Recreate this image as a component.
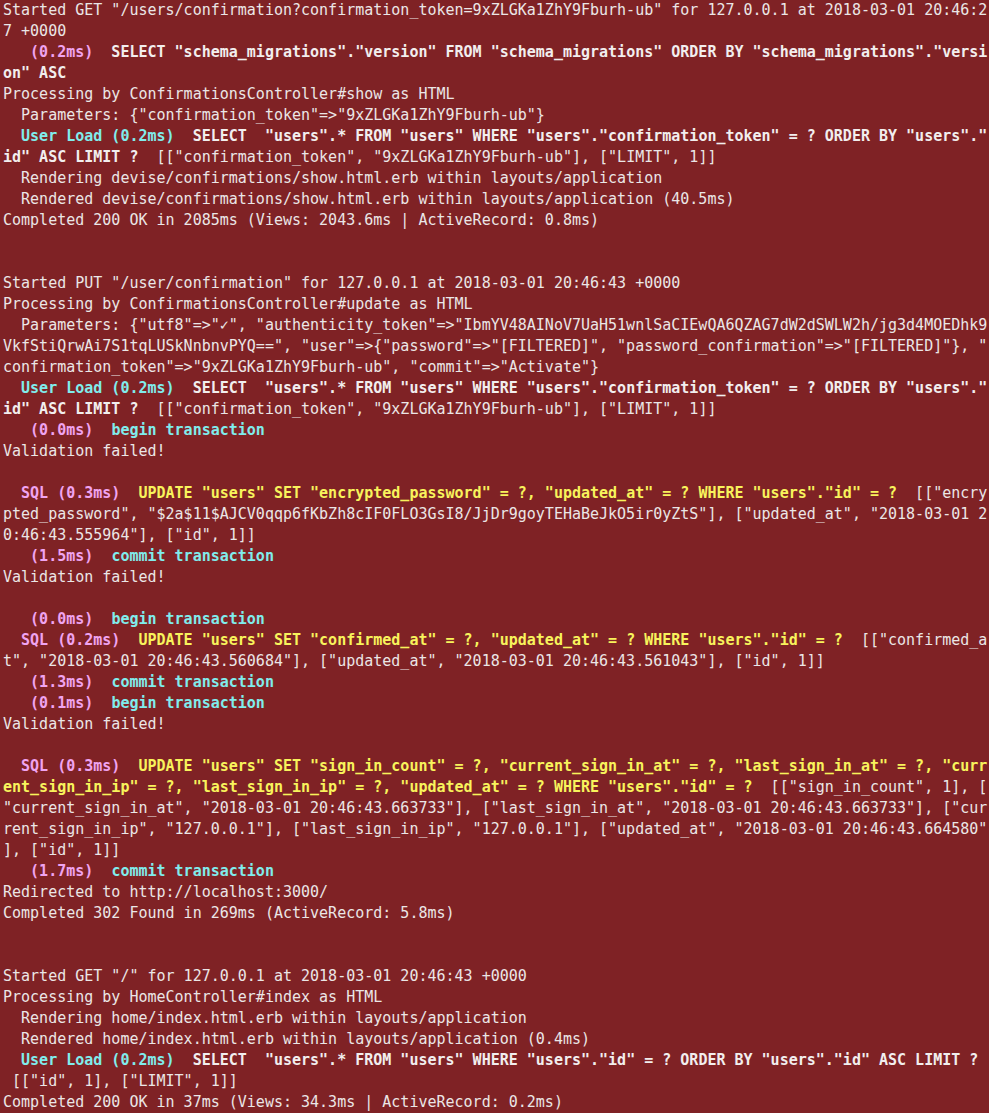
type Seg = [string, 'n' | 'b' | 'm' | 'c' | 'y']

const tone: Record<Seg[1], string> = {
  n: 'text-[#ebe6e6]',
  b: 'text-[#f2eeee] font-bold',
  m: 'text-[#f0a4f0] font-bold',
  c: 'text-[#80ecec] font-bold',
  y: 'text-[#f8f35c] font-bold',
}

// each row is one wrapped terminal line (109 columns)
const rows: Seg[][] = [
  [['Started GET "/users/confirmation?confirmation_token=9xZLGKa1ZhY9Fburh-ub" for 127.0.0.1 at 2018-03-01 20:46:2', 'n']],
  [['7 +0000', 'n']],
  [['   ', 'n'], ['(0.2ms)', 'm'], ['  SELECT "schema_migrations"."version" FROM "schema_migrations" ORDER BY "schema_migrations"."versi', 'b']],
  [['on" ASC', 'b']],
  [['Processing by ConfirmationsController#show as HTML', 'n']],
  [['  Parameters: {"confirmation_token"=>"9xZLGKa1ZhY9Fburh-ub"}', 'n']],
  [['  ', 'n'], ['User Load (0.2ms)', 'c'], ['  SELECT  "users".* FROM "users" WHERE "users"."confirmation_token" = ? ORDER BY "users"."', 'b']],
  [['id" ASC LIMIT ?', 'b'], ['  [["confirmation_token", "9xZLGKa1ZhY9Fburh-ub"], ["LIMIT", 1]]', 'n']],
  [['  Rendering devise/confirmations/show.html.erb within layouts/application', 'n']],
  [['  Rendered devise/confirmations/show.html.erb within layouts/application (40.5ms)', 'n']],
  [['Completed 200 OK in 2085ms (Views: 2043.6ms | ActiveRecord: 0.8ms)', 'n']],
  [],
  [],
  [['Started PUT "/user/confirmation" for 127.0.0.1 at 2018-03-01 20:46:43 +0000', 'n']],
  [['Processing by ConfirmationsController#update as HTML', 'n']],
  [['  Parameters: {"utf8"=>"✓", "authenticity_token"=>"IbmYV48AINoV7UaH51wnlSaCIEwQA6QZAG7dW2dSWLW2h/jg3d4MOEDhk9', 'n']],
  [['VkfStiQrwAi7S1tqLUSkNnbnvPYQ==", "user"=>{"password"=>"[FILTERED]", "password_confirmation"=>"[FILTERED]"}, "', 'n']],
  [['confirmation_token"=>"9xZLGKa1ZhY9Fburh-ub", "commit"=>"Activate"}', 'n']],
  [['  ', 'n'], ['User Load (0.2ms)', 'c'], ['  SELECT  "users".* FROM "users" WHERE "users"."confirmation_token" = ? ORDER BY "users"."', 'b']],
  [['id" ASC LIMIT ?', 'b'], ['  [["confirmation_token", "9xZLGKa1ZhY9Fburh-ub"], ["LIMIT", 1]]', 'n']],
  [['   ', 'n'], ['(0.0ms)', 'm'], ['  ', 'n'], ['begin transaction', 'c']],
  [['Validation failed!', 'n']],
  [],
  [['  ', 'n'], ['SQL (0.3ms)', 'm'], ['  UPDATE "users" SET "encrypted_password" = ?, "updated_at" = ? WHERE "users"."id" = ?', 'y'], ['  [["encry', 'n']],
  [['pted_password", "$2a$11$AJCV0qqp6fKbZh8cIF0FLO3GsI8/JjDr9goyTEHaBeJkO5ir0yZtS"], ["updated_at", "2018-03-01 2', 'n']],
  [['0:46:43.555964"], ["id", 1]]', 'n']],
  [['   ', 'n'], ['(1.5ms)', 'm'], ['  ', 'n'], ['commit transaction', 'c']],
  [['Validation failed!', 'n']],
  [],
  [['   ', 'n'], ['(0.0ms)', 'm'], ['  ', 'n'], ['begin transaction', 'c']],
  [['  ', 'n'], ['SQL (0.2ms)', 'm'], ['  UPDATE "users" SET "confirmed_at" = ?, "updated_at" = ? WHERE "users"."id" = ?', 'y'], ['  [["confirmed_a', 'n']],
  [['t", "2018-03-01 20:46:43.560684"], ["updated_at", "2018-03-01 20:46:43.561043"], ["id", 1]]', 'n']],
  [['   ', 'n'], ['(1.3ms)', 'm'], ['  ', 'n'], ['commit transaction', 'c']],
  [['   ', 'n'], ['(0.1ms)', 'm'], ['  ', 'n'], ['begin transaction', 'c']],
  [['Validation failed!', 'n']],
  [],
  [['  ', 'n'], ['SQL (0.3ms)', 'm'], ['  UPDATE "users" SET "sign_in_count" = ?, "current_sign_in_at" = ?, "last_sign_in_at" = ?, "curr', 'y']],
  [['ent_sign_in_ip" = ?, "last_sign_in_ip" = ?, "updated_at" = ? WHERE "users"."id" = ?', 'y'], ['  [["sign_in_count", 1], [', 'n']],
  [['"current_sign_in_at", "2018-03-01 20:46:43.663733"], ["last_sign_in_at", "2018-03-01 20:46:43.663733"], ["cur', 'n']],
  [['rent_sign_in_ip", "127.0.0.1"], ["last_sign_in_ip", "127.0.0.1"], ["updated_at", "2018-03-01 20:46:43.664580"', 'n']],
  [['], ["id", 1]]', 'n']],
  [['   ', 'n'], ['(1.7ms)', 'm'], ['  ', 'n'], ['commit transaction', 'c']],
  [['Redirected to http://localhost:3000/', 'n']],
  [['Completed 302 Found in 269ms (ActiveRecord: 5.8ms)', 'n']],
  [],
  [],
  [['Started GET "/" for 127.0.0.1 at 2018-03-01 20:46:43 +0000', 'n']],
  [['Processing by HomeController#index as HTML', 'n']],
  [['  Rendering home/index.html.erb within layouts/application', 'n']],
  [['  Rendered home/index.html.erb within layouts/application (0.4ms)', 'n']],
  [['  ', 'n'], ['User Load (0.2ms)', 'c'], ['  SELECT  "users".* FROM "users" WHERE "users"."id" = ? ORDER BY "users"."id" ASC LIMIT ?', 'b']],
  [[' [["id", 1], ["LIMIT", 1]]', 'n']],
  [['Completed 200 OK in 37ms (Views: 34.3ms | ActiveRecord: 0.2ms)', 'n']],
]

export default function App() {
  return (
    <div className="min-h-screen overflow-hidden bg-[#7f2225] pl-[3px] font-['DejaVu_Sans_Mono',monospace] text-[15px] leading-[21px]">
      {rows.map((row, i) => (
        <div key={i} className="h-[21px] whitespace-pre">
          {row.map(([text, kind], j) => (
            <span key={j} className={tone[kind]}>{text}</span>
          ))}
        </div>
      ))}
    </div>
  )
}
